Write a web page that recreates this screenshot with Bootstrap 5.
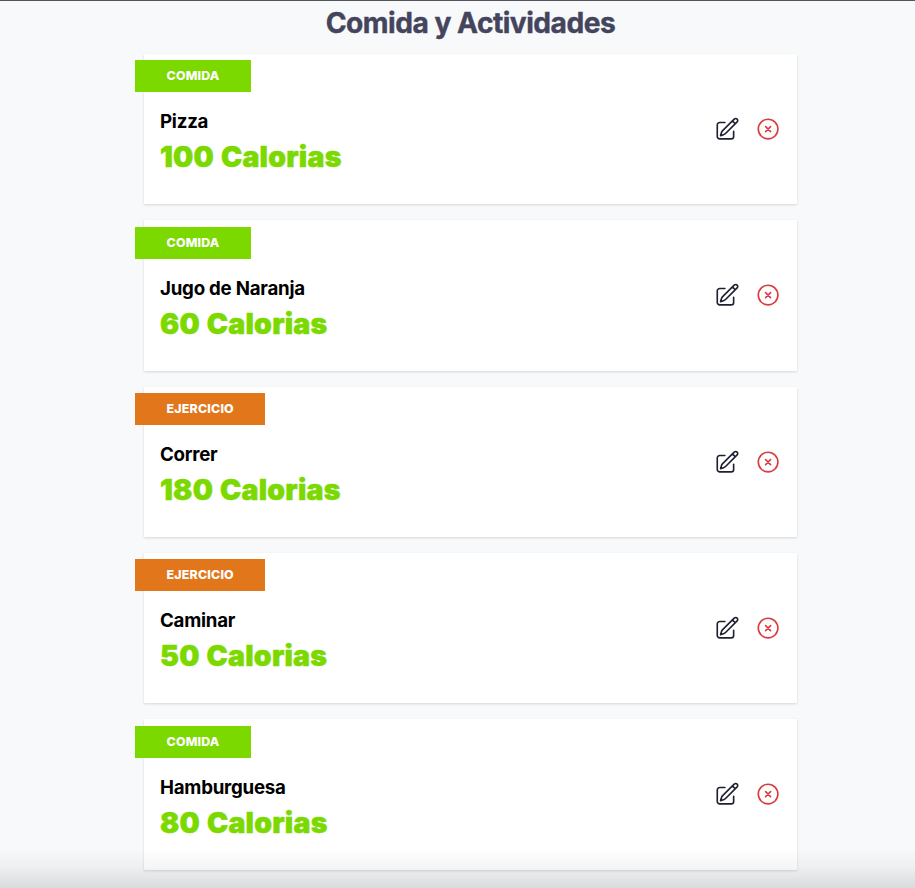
<!DOCTYPE html>
<html lang="es">
<head>
<meta charset="utf-8">
<meta name="viewport" content="width=device-width, initial-scale=1">
<title>Comida y Actividades</title>
<link rel="stylesheet" href="https://cdn.jsdelivr.net/npm/bootstrap@5.3.0/dist/css/bootstrap.min.css">
<style>
body{font-family:Inter,"Liberation Sans",sans-serif;background:#f8f9fb;color:#000;height:888px;overflow:hidden;border-top:1px solid #55565b}
.tracker{width:653px;margin-left:144px}
.tracker-title{font-size:28.2px;line-height:34px;font-weight:700;color:#44455c;letter-spacing:-.52px;-webkit-text-stroke:.4px #44455c;padding-top:5px;margin-bottom:14px}
.activities{gap:15.95px}
.activity{height:150.4px;padding:0 16px 0 16px;box-shadow:0 1px 2.5px rgba(0,0,0,.14)}
.tag{width:max-content;height:32px;margin:6.2px 0 0 -25px;padding:0 31.6px;font-size:12.4px;line-height:32.8px;font-weight:800;letter-spacing:.17px}
.tag-food{background:#7bd900}
.tag-exercise{background:#e1761b}
.activity-name{font-size:18.7px;line-height:26px;font-weight:700;margin-top:17px;letter-spacing:-.24px}
.activity-calories{font-size:28.5px;line-height:33px;font-weight:900;color:#7bd900;-webkit-text-stroke:.5px #7bd900;letter-spacing:.2px;word-spacing:1px;margin-top:5px}
.actions{gap:14.8px}
.actions svg{width:26.2px;height:26.2px;fill:none;stroke-width:1.5;stroke-linecap:round;stroke-linejoin:round}
.actions button{line-height:0}
.edit{stroke:#1f2033}
.remove{stroke:#d93d3f}
.bottom-shade{height:40px;background:linear-gradient(rgba(0,0,0,0),rgba(0,0,0,.04) 50%,rgba(0,0,0,.12))}
</style>
</head>
<body>
<svg class="d-none">
<symbol id="pencil" viewBox="0 0 24 24"><path d="m16.862 4.487 1.687-1.688a1.875 1.875 0 1 1 2.652 2.652L10.582 16.07a4.5 4.5 0 0 1-1.897 1.13L6 18l.8-2.685a4.5 4.5 0 0 1 1.13-1.897l8.932-8.931Zm0 0L19.5 7.125M18 14v4.75A2.25 2.25 0 0 1 15.75 21H5.25A2.25 2.25 0 0 1 3 18.75V8.25A2.25 2.25 0 0 1 5.25 6H10"/></symbol>
<symbol id="cross" viewBox="0 0 24 24"><path d="m9.75 9.75 4.5 4.5m0-4.5-4.5 4.5M21 12a9 9 0 1 1-18 0 9 9 0 0 1 18 0Z"/></symbol>
</svg>
<main class="tracker">
<h1 class="tracker-title text-center">Comida y Actividades</h1>
<div class="activities d-flex flex-column">
<article class="activity bg-white d-flex justify-content-between"><div><p class="tag tag-food text-white text-uppercase">Comida</p><p class="activity-name mb-0">Pizza</p><p class="activity-calories mb-0">100 Calorias</p></div><div class="actions d-flex align-items-center"><button class="border-0 bg-transparent p-0" aria-label="Editar"><svg class="edit"><use href="#pencil"/></svg></button><button class="border-0 bg-transparent p-0" aria-label="Eliminar"><svg class="remove"><use href="#cross"/></svg></button></div></article>
<article class="activity bg-white d-flex justify-content-between"><div><p class="tag tag-food text-white text-uppercase">Comida</p><p class="activity-name mb-0">Jugo de Naranja</p><p class="activity-calories mb-0">60 Calorias</p></div><div class="actions d-flex align-items-center"><button class="border-0 bg-transparent p-0" aria-label="Editar"><svg class="edit"><use href="#pencil"/></svg></button><button class="border-0 bg-transparent p-0" aria-label="Eliminar"><svg class="remove"><use href="#cross"/></svg></button></div></article>
<article class="activity bg-white d-flex justify-content-between"><div><p class="tag tag-exercise text-white text-uppercase">Ejercicio</p><p class="activity-name mb-0">Correr</p><p class="activity-calories mb-0">180 Calorias</p></div><div class="actions d-flex align-items-center"><button class="border-0 bg-transparent p-0" aria-label="Editar"><svg class="edit"><use href="#pencil"/></svg></button><button class="border-0 bg-transparent p-0" aria-label="Eliminar"><svg class="remove"><use href="#cross"/></svg></button></div></article>
<article class="activity bg-white d-flex justify-content-between"><div><p class="tag tag-exercise text-white text-uppercase">Ejercicio</p><p class="activity-name mb-0">Caminar</p><p class="activity-calories mb-0">50 Calorias</p></div><div class="actions d-flex align-items-center"><button class="border-0 bg-transparent p-0" aria-label="Editar"><svg class="edit"><use href="#pencil"/></svg></button><button class="border-0 bg-transparent p-0" aria-label="Eliminar"><svg class="remove"><use href="#cross"/></svg></button></div></article>
<article class="activity bg-white d-flex justify-content-between"><div><p class="tag tag-food text-white text-uppercase">Comida</p><p class="activity-name mb-0">Hamburguesa</p><p class="activity-calories mb-0">80 Calorias</p></div><div class="actions d-flex align-items-center"><button class="border-0 bg-transparent p-0" aria-label="Editar"><svg class="edit"><use href="#pencil"/></svg></button><button class="border-0 bg-transparent p-0" aria-label="Eliminar"><svg class="remove"><use href="#cross"/></svg></button></div></article>
</div>
</main>
<div class="bottom-shade fixed-bottom pe-none"></div>
<script src="https://cdn.jsdelivr.net/npm/bootstrap@5.3.0/dist/js/bootstrap.bundle.min.js"></script>
</body>
</html>
